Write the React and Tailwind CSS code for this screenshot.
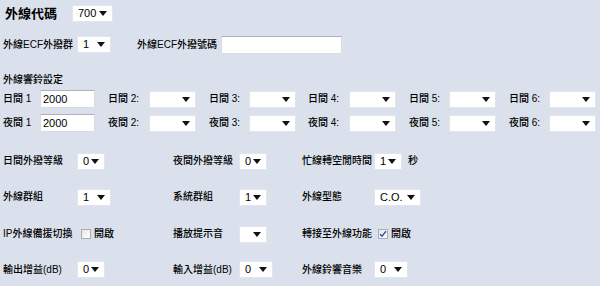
const font = { fontFamily: '"Liberation Sans", "Noto Sans CJK TC", sans-serif' }

const Caret = () => (
  <svg width="8" height="5" viewBox="0 0 8 5" className="shrink-0">
    <path d="M0 0h8L4 5z" fill="#111" />
  </svg>
)

const Select = ({ value = '', w = 'w-[47px]' }) => (
  <div className={`${w} h-[17px] bg-white border border-[#e2e6ec] rounded-[1px] flex items-center justify-between pl-[5px] pr-[5px] text-[11px] text-black leading-none`}>
    <span>{value}</span>
    <Caret />
  </div>
)

const TextBox = ({ value = '', w = 'w-[55px]' }) => (
  <div className={`${w} h-[18px] bg-white border border-[#d9dde3] border-t-[#aeb2b8] flex items-center pl-[2px] text-[11px] text-black leading-none`}>
    {value}
  </div>
)

const Check = ({ checked }) => (
  <div className="w-[10px] h-[10px] border border-[#a9acb1] bg-gradient-to-br from-[#e8e8e8] to-white flex items-center justify-center">
    {checked && (
      <svg width="8" height="8" viewBox="0 0 8 8">
        <path d="M1 4.2l2 2L7 1.2" stroke="#2b4fb3" strokeWidth="1.4" fill="none" />
      </svg>
    )}
  </div>
)

const Label = ({ children, w }) => (
  <div className={`${w} shrink-0 text-[10px] font-medium text-black leading-none`}>{children}</div>
)

const ringCols = [
  { n: '1', w: 'w-[105px]', lw: 'w-[37px]' },
  { n: '2:', w: 'w-[101px]', lw: 'w-[41px]' },
  { n: '3:', w: 'w-[99px]', lw: 'w-[40px]' },
  { n: '4:', w: 'w-[101px]', lw: 'w-[41px]' },
  { n: '5:', w: 'w-[100px]', lw: 'w-[40px]' },
  { n: '6:', w: 'w-[90px]', lw: 'w-[40px]' },
]

const RingRow = ({ prefix }) => (
  <div className="flex items-center h-[18px]">
    {ringCols.map((c, i) => (
      <div key={i} className={`${c.w} flex items-center`}>
        <Label w={c.lw}>{prefix} {c.n}</Label>
        {i === 0 ? <TextBox value="2000" /> : <Select />}
      </div>
    ))}
  </div>
)

const Row = ({ children, className = '' }) => (
  <div className={`flex items-center ${className}`}>{children}</div>
)

export default function App() {
  return (
    <div style={font} className="w-[600px] h-[286px] bg-[#dae1ec] pl-[3px] pt-[5px] overflow-hidden">
      <Row className="h-[17px]">
        <div className="w-[69px] pl-[2px] text-[13px] font-bold text-black leading-none">外線代碼</div>
        <Select value="700" w="w-[41px]" />
      </Row>

      <Row className="mt-[14px] h-[17px]">
        <Label w="w-[74px]">外線ECF外撥群</Label>
        <Select value="1" w="w-[34px]" />
        <div className="w-[26px]" />
        <Label w="w-[84px]">外線ECF外撥號碼</Label>
        <TextBox w="w-[121px]" />
      </Row>

      <div className="mt-[22px] text-[10px] font-medium leading-none text-black">外線響鈴設定</div>

      <div className="mt-[5px] flex flex-col gap-[6px]">
        <RingRow prefix="日間" />
        <RingRow prefix="夜間" />
      </div>

      <Row className="mt-[21px] h-[16px]">
        <div className="w-[170px] flex items-center">
          <Label w="w-[74px]">日間外撥等級</Label>
          <Select value="0" w="w-[28px]" />
        </div>
        <div className="w-[129px] flex items-center">
          <Label w="w-[66px]">夜間外撥等級</Label>
          <Select value="0" w="w-[28px]" />
        </div>
        <div className="flex items-center">
          <Label w="w-[72px]">忙線轉空閒時間</Label>
          <Select value="1" w="w-[28px]" />
          <span className="ml-[6px] text-[10px] font-medium leading-none">秒</span>
        </div>
      </Row>

      <Row className="mt-[20px] h-[16px]">
        <div className="w-[170px] flex items-center">
          <Label w="w-[74px]">外線群組</Label>
          <Select value="1" w="w-[34px]" />
        </div>
        <div className="w-[129px] flex items-center">
          <Label w="w-[66px]">系統群組</Label>
          <Select value="1" w="w-[28px]" />
        </div>
        <div className="flex items-center">
          <Label w="w-[72px]">外線型態</Label>
          <Select value="C.O." w="w-[47px]" />
        </div>
      </Row>

      <Row className="mt-[21px] h-[16px]">
        <div className="w-[170px] flex items-center">
          <Label w="w-[78px]">IP外線備援切換</Label>
          <Check />
          <span className="ml-[3px] text-[10px] font-medium leading-none">開啟</span>
        </div>
        <div className="w-[129px] flex items-center">
          <Label w="w-[66px]">播放提示音</Label>
          <Select w="w-[28px]" />
        </div>
        <div className="flex items-center">
          <Label w="w-[76px]">轉接至外線功能</Label>
          <Check checked />
          <span className="ml-[3px] text-[10px] font-medium leading-none">開啟</span>
        </div>
      </Row>

      <Row className="mt-[19px] h-[17px]">
        <div className="w-[170px] flex items-center">
          <Label w="w-[74px]">輸出增益(dB)</Label>
          <Select value="0" w="w-[28px]" />
        </div>
        <div className="w-[129px] flex items-center">
          <Label w="w-[66px]">輸入增益(dB)</Label>
          <Select value="0" w="w-[34px]" />
        </div>
        <div className="flex items-center">
          <Label w="w-[72px]">外線鈴響音樂</Label>
          <Select value="0" w="w-[34px]" />
        </div>
      </Row>
    </div>
  )
}
